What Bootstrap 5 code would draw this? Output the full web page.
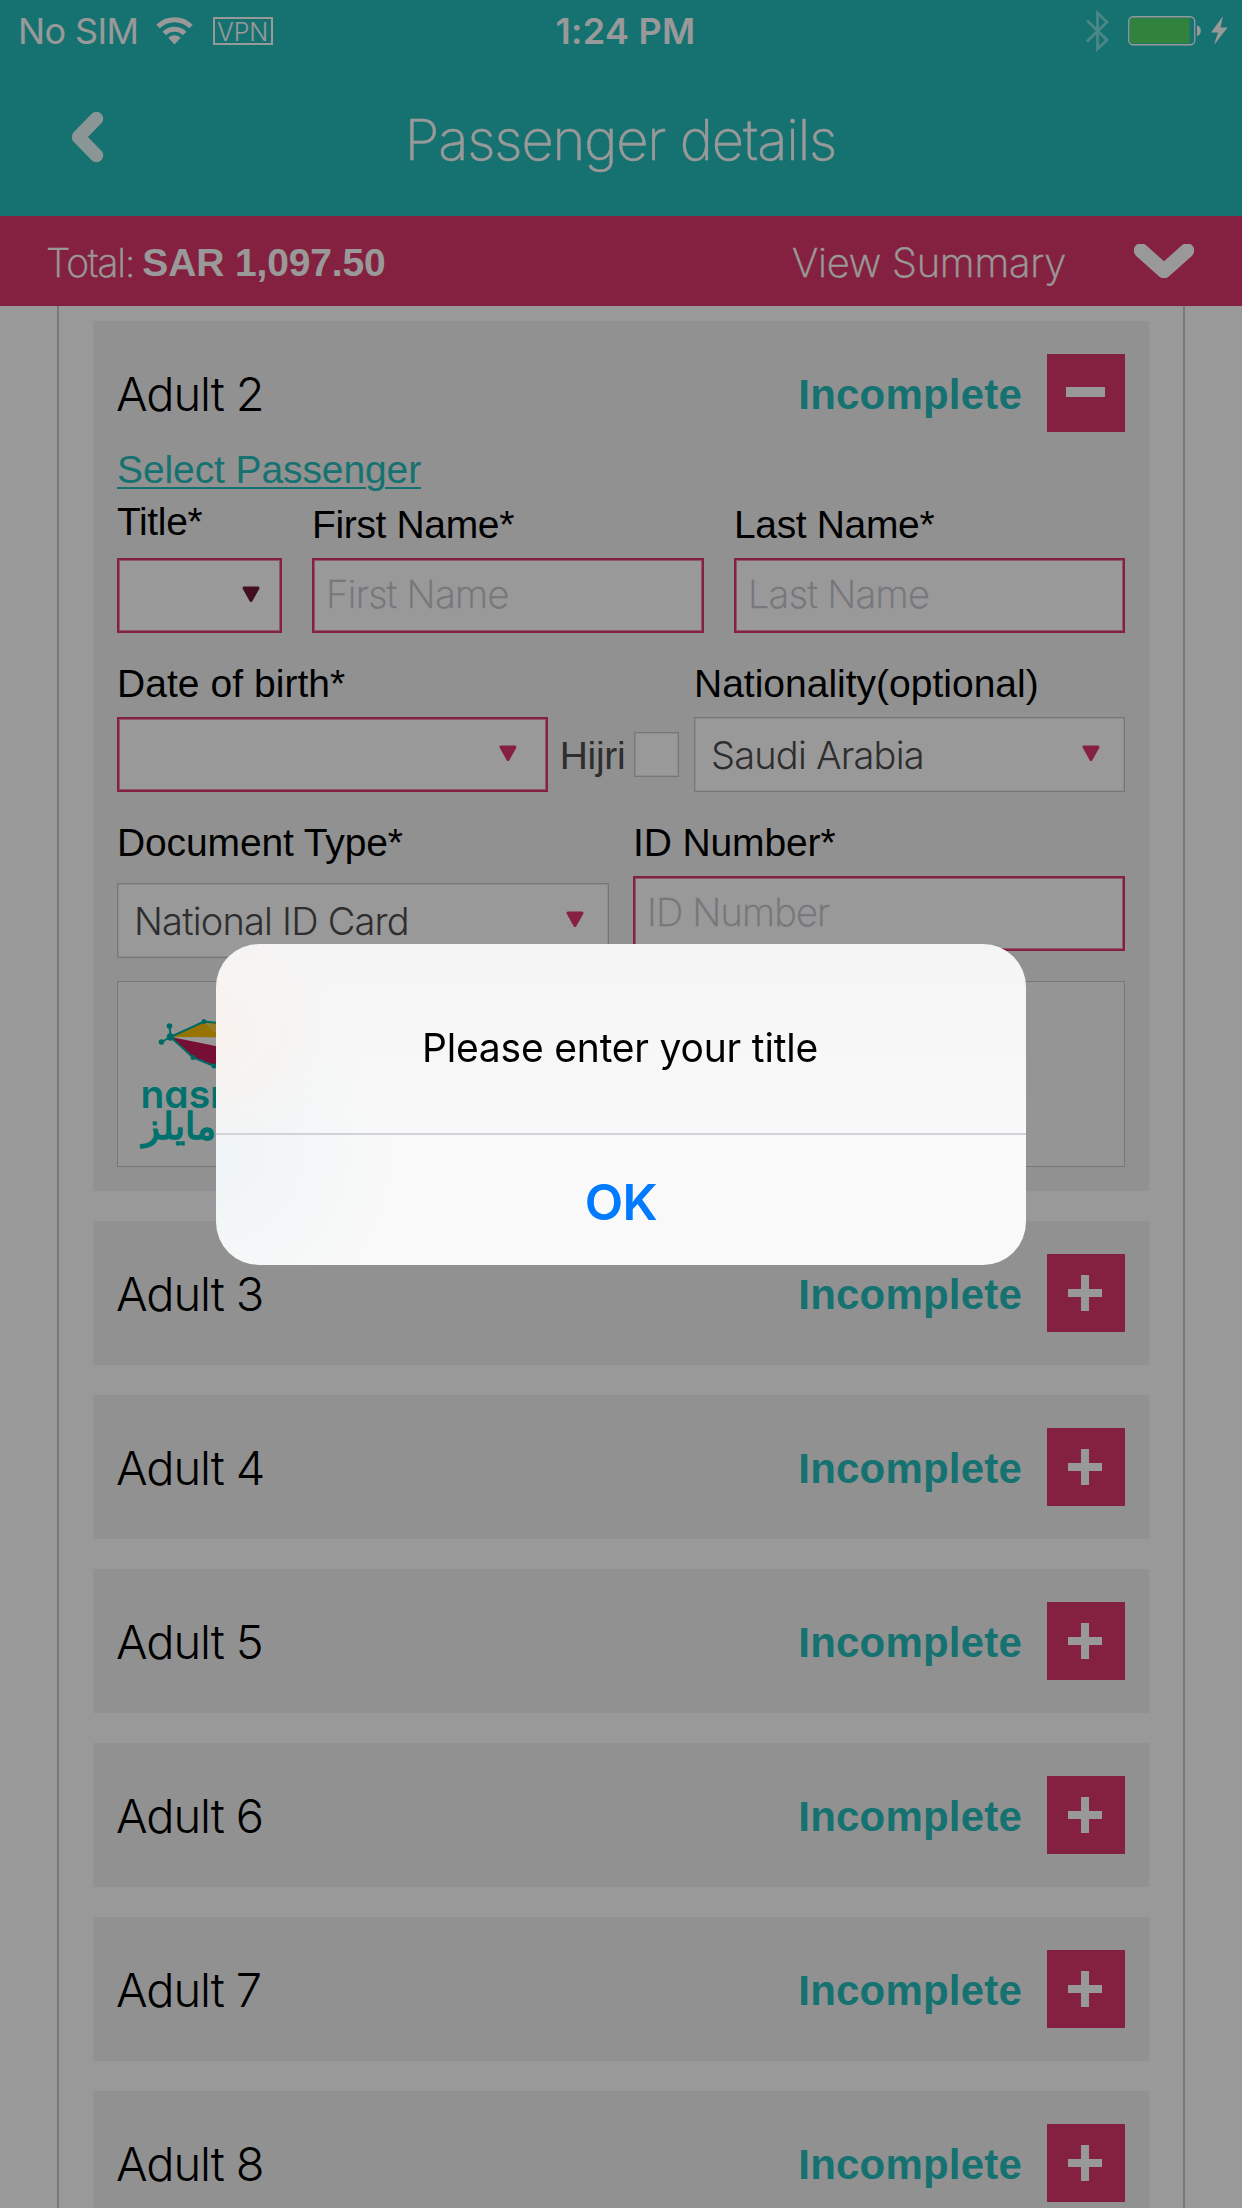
<!DOCTYPE html>
<html lang="en">
<head>
<meta charset="utf-8">
<meta name="viewport" content="width=device-width, initial-scale=1">
<title>Passenger details</title>
<link href="https://cdn.jsdelivr.net/npm/bootstrap@5.3.0/dist/css/bootstrap.min.css" rel="stylesheet">
<style>
:root{--teal:#25bebb;--pink:#de376b;--line:#c6c6c6}
html,body{height:2208px;overflow:hidden}
body{background:#fff;color:#000;font-family:"Liberation Sans",Arial,sans-serif;font-size:39px;line-height:48px}
svg{display:block;flex:none}
.f-light{font-family:Inter,"Liberation Sans",sans-serif;font-weight:300}
.f-thin{font-family:Inter,"Liberation Sans",sans-serif;font-weight:200;-webkit-text-stroke:.5px currentColor}
.topbar{background:var(--teal);height:216px;color:#fff}
.statusbar{height:60px;font:400 36px/44px Inter,sans-serif;padding:2px 14px 0 18px}
.statusbar .side{flex:1 1 0}
.carrier{letter-spacing:-.6px}
.clock{font-weight:600;letter-spacing:.3px;margin-left:5px}
.vpn{border:2px solid #fff;font-size:25px;font-weight:300;line-height:26px;width:60px;height:28px;letter-spacing:-.2px;margin-left:20px;margin-top:-1px}
.titlebar{height:156px;padding-left:71px}
.page-title{font-size:56px;line-height:70px;letter-spacing:-1.15px;padding-top:3px;margin:0 105px 0 0}
.totalbar{background:var(--pink);color:#fff;height:90px;padding:3px 48px 0 46px}
.total-label{letter-spacing:-1.2px;margin-right:8px}
.total-sum{letter-spacing:-.15px}
.summary{font-size:40px;letter-spacing:-.25px;margin-right:68px;padding-top:1px}
.frame{width:1128px;height:1902px;margin-left:57px;border:solid #cacaca;border-width:0 2px;padding:15px 34px 0;gap:30px}
.pax{background:#f2f2f2;padding:33px 24px}
.pax-open{padding-bottom:24px}
.pax-head{height:78px}
.pax-name{font-size:47px;line-height:56px;letter-spacing:-1.1px;padding-top:2px;margin:0 0 0 -1px}
.pax-state{color:var(--teal);font-weight:700;font-size:42px;letter-spacing:.2px;padding-top:3px;margin-right:25px}
.toggle{width:78px;height:78px;padding:0;border:0;border-radius:0;background:var(--pink)}
.pick{color:var(--teal);text-decoration:underline;text-decoration-thickness:2px;text-underline-offset:4px;letter-spacing:-.1px;margin-top:13px;padding-top:1px;height:48px;width:max-content}
.lbl{height:48px;padding-top:1px;letter-spacing:-.12px}
.lbl.name{letter-spacing:-.35px;padding-top:0}
.field-row{margin-top:26px}
.box{height:75px;background:#fff;border:1px solid var(--line);box-shadow:inset 0 0 0 1px #ececec;color:#4e4e4e;font-size:38px}
.box.req{border:2px solid var(--pink);box-shadow:inset 0 0 0 1px #ec94b0}
.sel{padding:1px 24px 0 16px;letter-spacing:-.8px}
.inp{padding:0 12px 3px;color:#c6c6cd;letter-spacing:-.55px}
.hijri{height:75px;color:#4e4e4e;padding-top:2px;letter-spacing:-.3px;margin-left:-3px}
.tick{width:45px;height:45px;background:#fff;border:1px solid var(--line);box-shadow:inset 0 0 0 1px #ececec}
.w-title{width:165px}.w-first{width:392px}.w-last{width:391px}.w-half{width:431px}.w-doc{width:492px}
.brand{margin-top:23px;height:186px;background:#f9f9f9;border:1px solid var(--line)}
.veil{opacity:.4;width:100%;height:2208px}
.alertbox{z-index:1060;left:216px;top:944px;width:810px;height:321px;border-radius:43px;overflow:hidden;font-family:Inter,sans-serif;
background:radial-gradient(circle at 0 28%,#f8f2ee 0,rgba(248,242,238,0) 120px),radial-gradient(circle at 0 66%,#eff4f6 0,rgba(239,244,246,0) 180px),linear-gradient(#f5f5f5,#f9f9f9 60%)}
.alert-msg{height:189px;padding:18px 2px 0 0;letter-spacing:-.2px}
.alert-ok{height:132px;border-top:2px solid #d1d3d9;color:#007aff;font-weight:600;font-size:50px;padding-top:4px;letter-spacing:-.6px}
</style>
</head>
<body>
<header class="topbar">
  <div class="statusbar d-flex align-items-center">
    <div class="side d-flex align-items-center">
      <span class="carrier">No SIM</span>
      <svg style="margin-left:17px" width="37" height="28" viewBox="0 0 37 28"><g fill="none" stroke="#fff" stroke-width="5"><path d="M2 9.500a23.500 23.500 0 0 1 33 0"/><path d="M8.300 16.500a14.500 14.500 0 0 1 20.400 0"/></g><path d="M18.500 27.500l-6.200-6.700a9 9 0 0 1 12.400 0z" fill="#fff"/></svg>
      <span class="vpn d-flex justify-content-center">VPN</span>
    </div>
    <span class="clock">1:24 PM</span>
    <div class="side d-flex align-items-center justify-content-end">
      <svg width="25" height="42" viewBox="0 0 25 42"><path d="M2 10.500L22 30 12.500 39V3L22 12 2 31.500" fill="none" stroke="#7de1df" stroke-width="2.800"/></svg>
      <svg style="margin-left:18px" width="74" height="30" viewBox="0 0 74 30"><rect x=".75" y=".75" width="66" height="28" rx="4.500" fill="none" stroke="#fff" stroke-width="1.300"/><path d="M4 2.200h57.500v25H4a2 2 0 0 1-2-2v-21a2 2 0 0 1 2-2z" fill="#52d964"/><path d="M69 9.500c5 0 5 10.500 0 10.500z" fill="#fff"/></svg>
      <svg style="margin-left:9px" width="17" height="30" viewBox="0 0 17 30"><path d="M12 0L0 16.500h7L3 29 16.500 11.500H9.500z" fill="#fff"/></svg>
    </div>
  </div>
  <div class="titlebar d-flex align-items-center">
    <svg width="33" height="52" viewBox="0 0 33 52" style="margin-top:-3px"><path d="M25.500 7.500L7.500 26 25.500 44.500" fill="none" stroke="#e6fafa" stroke-width="13.500" stroke-linecap="round" stroke-linejoin="round"/></svg>
    <h1 class="page-title f-thin flex-fill text-center">Passenger details</h1>
  </div>
</header>
<div class="totalbar d-flex align-items-center">
  <span class="total-label f-thin">Total:</span><strong class="total-sum">SAR 1,097.50</strong>
  <span class="summary f-thin ms-auto">View Summary</span>
  <svg width="60" height="34" viewBox="0 0 60 34" style="margin-top:-4px"><path d="M7 6.500L30 27 53 6.500" fill="none" stroke="#fff" stroke-width="14.500" stroke-linecap="round" stroke-linejoin="round"/></svg>
</div>

<main class="frame d-flex flex-column">
  <section class="pax pax-open">
    <div class="pax-head d-flex align-items-center">
      <h2 class="pax-name f-light">Adult 2</h2><span class="pax-state ms-auto">Incomplete</span>
      <button class="btn toggle" aria-label="Collapse"><svg width="78" height="78"><path d="M19 38h39" stroke="#fff" stroke-width="10"/></svg></button>
    </div>
    <a class="pick d-block">Select Passenger</a>
    <div class="d-flex justify-content-between align-items-end" style="margin-top:5px">
      <div class="w-title"><div class="lbl name" style="margin-bottom:12px">Title*</div>
        <div class="box req sel d-flex align-items-center justify-content-end" style="padding-right:20px"><svg width="18" height="17" viewBox="0 0 18 17" style="margin-top:-4px"><path d="M2 2h14L9 14.500z" fill="#6e1b34" stroke="#6e1b34" stroke-width="3" stroke-linejoin="round"/></svg></div></div>
      <div class="w-first"><div class="lbl name" style="margin-bottom:9px">First Name*</div><div class="box req inp f-thin d-flex align-items-center">First Name</div></div>
      <div class="w-last"><div class="lbl name" style="margin-bottom:9px">Last Name*</div><div class="box req inp f-thin d-flex align-items-center">Last Name</div></div>
    </div>
    <div class="field-row d-flex justify-content-between align-items-end">
      <div class="w-half"><div class="lbl" style="margin-bottom:10px;letter-spacing:.05px">Date of birth*</div>
        <div class="box req sel d-flex align-items-center justify-content-end" style="padding-right:29px"><svg width="18" height="17" viewBox="0 0 18 17" style="margin-top:-3px"><path d="M2 2h14L9 14.500z" fill="#de376b" stroke="#de376b" stroke-width="3" stroke-linejoin="round"/></svg></div></div>
      <div class="hijri d-flex align-items-center"><span>Hijri</span><span class="tick d-block" style="margin-left:9px;margin-top:-2px"></span></div>
      <div class="w-half"><div class="lbl" style="margin-bottom:10px;letter-spacing:0">Nationality(optional)</div>
        <div class="box sel f-light d-flex align-items-center justify-content-between"><span>Saudi Arabia</span><svg width="18" height="17" viewBox="0 0 18 17" style="margin-top:-3px"><path d="M2 2h14L9 14.500z" fill="#de376b" stroke="#de376b" stroke-width="3" stroke-linejoin="round"/></svg></div></div>
    </div>
    <div class="field-row d-flex justify-content-between align-items-start">
      <div class="w-doc"><div class="lbl" style="margin-bottom:17px">Document Type*</div>
        <div class="box sel f-light d-flex align-items-center justify-content-between"><span>National ID Card</span><svg width="18" height="17" viewBox="0 0 18 17" style="margin-top:-3px"><path d="M2 2h14L9 14.500z" fill="#de376b" stroke="#de376b" stroke-width="3" stroke-linejoin="round"/></svg></div></div>
      <div class="w-doc"><div class="lbl" style="margin-bottom:10px">ID Number*</div><div class="box req inp f-thin d-flex align-items-center" style="letter-spacing:-.8px">ID Number</div></div>
    </div>
    <div class="brand">
      <svg width="230" height="184" viewBox="118 982 230 184">
        <path d="M171 1037L204 1022 250 1026V1038z" fill="#fcc000"/><path d="M204 1023L221 1038H250V1026z" fill="#fdd04c"/>
        <path d="M171 1037L250 1038V1052z" fill="#fff"/><path d="M171 1037L250 1053 228 1072 193 1057z" fill="#c61958"/>
        <path d="M161.500 1042L170.500 1037 169.500 1026M170.500 1037L204 1021.500 250 1026M170.500 1037L193 1057.500 214 1066 228 1072" fill="none" stroke="#00b0a9" stroke-width="2"/>
        <g fill="#00b0a9"><circle cx="170.500" cy="1037" r="3.800"/><circle cx="169.500" cy="1026" r="2.800"/><circle cx="161.500" cy="1042" r="2.800"/><circle cx="204" cy="1021.500" r="2.500"/><circle cx="193" cy="1057.500" r="2.500"/><circle cx="214" cy="1066" r="2.500"/></g>
        <g fill="#00bdb5"><text x="140.500" y="1108" font-family="Inter" font-weight="600" font-size="39" style="font-feature-settings:'cv11'">nasmiles</text>
        <text x="142" y="1139" font-family="DejaVu Sans" font-weight="400" font-size="37" stroke="#00bdb5" stroke-width="1.500" stroke-linejoin="round">ناس مايلز</text></g>
      </svg>
    </div>
  </section>
  <section class="pax"><div class="pax-head d-flex align-items-center"><h2 class="pax-name f-light">Adult 3</h2><span class="pax-state ms-auto">Incomplete</span><button class="btn toggle" aria-label="Expand"><svg width="78" height="78"><path d="M21 39h34M38 21v36" stroke="#fff" stroke-width="8"/></svg></button></div></section>
  <section class="pax"><div class="pax-head d-flex align-items-center"><h2 class="pax-name f-light">Adult 4</h2><span class="pax-state ms-auto">Incomplete</span><button class="btn toggle" aria-label="Expand"><svg width="78" height="78"><path d="M21 39h34M38 21v36" stroke="#fff" stroke-width="8"/></svg></button></div></section>
  <section class="pax"><div class="pax-head d-flex align-items-center"><h2 class="pax-name f-light">Adult 5</h2><span class="pax-state ms-auto">Incomplete</span><button class="btn toggle" aria-label="Expand"><svg width="78" height="78"><path d="M21 39h34M38 21v36" stroke="#fff" stroke-width="8"/></svg></button></div></section>
  <section class="pax"><div class="pax-head d-flex align-items-center"><h2 class="pax-name f-light">Adult 6</h2><span class="pax-state ms-auto">Incomplete</span><button class="btn toggle" aria-label="Expand"><svg width="78" height="78"><path d="M21 39h34M38 21v36" stroke="#fff" stroke-width="8"/></svg></button></div></section>
  <section class="pax"><div class="pax-head d-flex align-items-center"><h2 class="pax-name f-light">Adult 7</h2><span class="pax-state ms-auto">Incomplete</span><button class="btn toggle" aria-label="Expand"><svg width="78" height="78"><path d="M21 39h34M38 21v36" stroke="#fff" stroke-width="8"/></svg></button></div></section>
  <section class="pax"><div class="pax-head d-flex align-items-center"><h2 class="pax-name f-light">Adult 8</h2><span class="pax-state ms-auto">Incomplete</span><button class="btn toggle" aria-label="Expand"><svg width="78" height="78"><path d="M21 39h34M38 21v36" stroke="#fff" stroke-width="8"/></svg></button></div></section>
</main>

<div class="modal-backdrop veil"></div>
<div class="alertbox position-absolute" role="alertdialog">
  <div class="alert-msg d-flex align-items-center justify-content-center">Please enter your title</div>
  <div class="alert-ok d-flex align-items-center justify-content-center">OK</div>
</div>
<script src="https://cdn.jsdelivr.net/npm/bootstrap@5.3.0/dist/js/bootstrap.bundle.min.js"></script>
</body>
</html>
